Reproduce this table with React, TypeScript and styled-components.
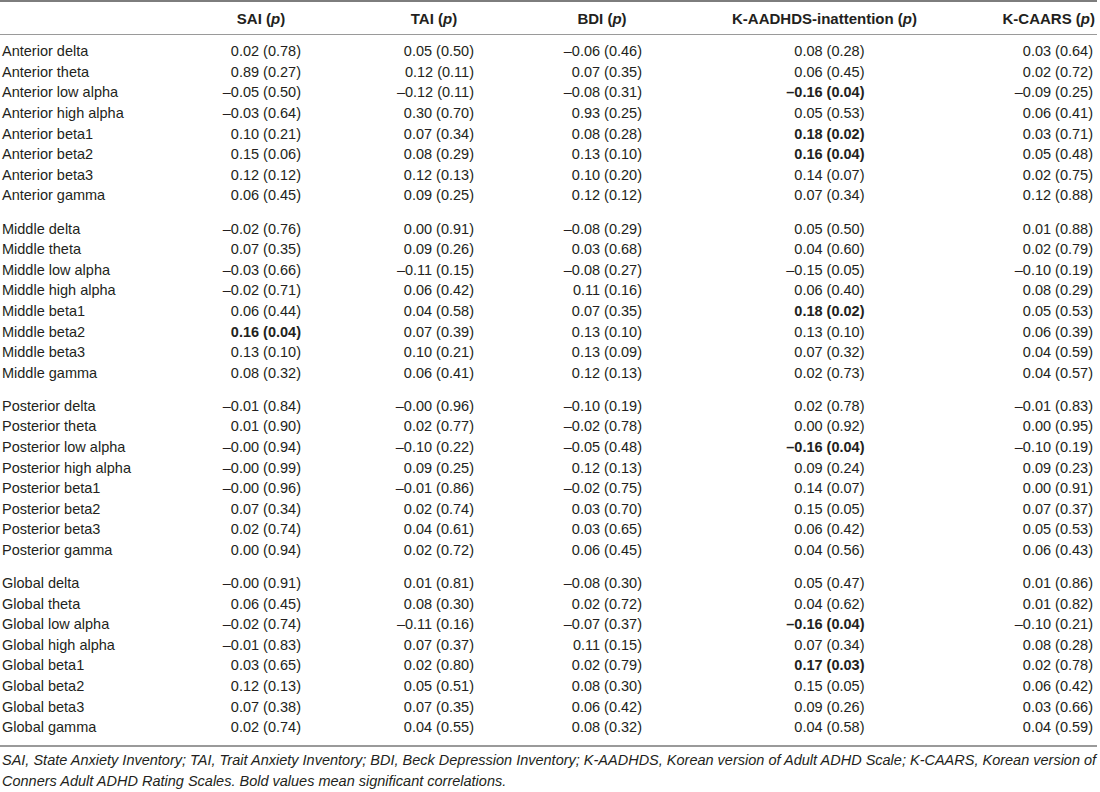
import React from "react";
import styled, { createGlobalStyle } from "styled-components";

const GlobalStyle = createGlobalStyle`
  html, body { margin: 0; padding: 0; background: #ffffff; }
  body { font-family: "Liberation Sans", Arial, sans-serif; color: #231f20; }
`;

const COLS = "190px 142px 204px 132px 313px 1fr";

const Table = styled.div`
  width: 1097px;
`;

const HeaderRow = styled.div`
  display: grid;
  grid-template-columns: ${COLS};
  height: 31px;
  padding-top: 1px;
  align-items: center;
  border-top: 2px solid #7d7d7d;
  border-bottom: 1px solid #9a9a9a;
  font-weight: bold;
  font-size: 15px;
`;

const HeadCell = styled.div<{ $end?: boolean }>`
  text-align: ${(p) => (p.$end ? "right" : "center")};
  padding-right: ${(p) => (p.$end ? "2px" : "0")};
  white-space: nowrap;
  i { font-style: italic; }
`;

const Body = styled.div`
  padding: 6px 0 7px;
  border-bottom: 2px solid #9a9a9a;
`;

const Group = styled.div`
  & + & { margin-top: 12.5px; }
`;

const Row = styled.div`
  display: grid;
  grid-template-columns: ${COLS};
  height: 20.6px;
  align-items: center;
  font-size: 14.5px;
`;

const Label = styled.div`
  padding-left: 2px;
  white-space: nowrap;
`;

const Cell = styled.div<{ $end?: boolean }>`
  display: flex;
  justify-content: ${(p) => (p.$end ? "flex-end" : "center")};
  padding-right: ${(p) => (p.$end ? "4px" : "0")};
`;

const Value = styled.span<{ $bold?: boolean }>`
  display: inline-block;
  width: 80px;
  text-align: right;
  white-space: nowrap;
  font-weight: ${(p) => (p.$bold ? "bold" : "normal")};
`;

const Note = styled.p`
  margin: 0;
  padding: 3px 0 0 2px;
  font-size: 14.5px;
  line-height: 21.5px;
  font-style: italic;
  white-space: nowrap;
`;

type GroupData = { name: string; rows: string[][] };

const bands = ["delta", "theta", "low alpha", "high alpha", "beta1", "beta2", "beta3", "gamma"];

const data: GroupData[] = [
  {
    name: "Anterior",
    rows: [
      ["0.02 (0.78)", "0.05 (0.50)", "–0.06 (0.46)", "0.08 (0.28)", "0.03 (0.64)"],
      ["0.89 (0.27)", "0.12 (0.11)", "0.07 (0.35)", "0.06 (0.45)", "0.02 (0.72)"],
      ["–0.05 (0.50)", "–0.12 (0.11)", "–0.08 (0.31)", "*–0.16 (0.04)", "–0.09 (0.25)"],
      ["–0.03 (0.64)", "0.30 (0.70)", "0.93 (0.25)", "0.05 (0.53)", "0.06 (0.41)"],
      ["0.10 (0.21)", "0.07 (0.34)", "0.08 (0.28)", "*0.18 (0.02)", "0.03 (0.71)"],
      ["0.15 (0.06)", "0.08 (0.29)", "0.13 (0.10)", "*0.16 (0.04)", "0.05 (0.48)"],
      ["0.12 (0.12)", "0.12 (0.13)", "0.10 (0.20)", "0.14 (0.07)", "0.02 (0.75)"],
      ["0.06 (0.45)", "0.09 (0.25)", "0.12 (0.12)", "0.07 (0.34)", "0.12 (0.88)"],
    ],
  },
  {
    name: "Middle",
    rows: [
      ["–0.02 (0.76)", "0.00 (0.91)", "–0.08 (0.29)", "0.05 (0.50)", "0.01 (0.88)"],
      ["0.07 (0.35)", "0.09 (0.26)", "0.03 (0.68)", "0.04 (0.60)", "0.02 (0.79)"],
      ["–0.03 (0.66)", "–0.11 (0.15)", "–0.08 (0.27)", "–0.15 (0.05)", "–0.10 (0.19)"],
      ["–0.02 (0.71)", "0.06 (0.42)", "0.11 (0.16)", "0.06 (0.40)", "0.08 (0.29)"],
      ["0.06 (0.44)", "0.04 (0.58)", "0.07 (0.35)", "*0.18 (0.02)", "0.05 (0.53)"],
      ["*0.16 (0.04)", "0.07 (0.39)", "0.13 (0.10)", "0.13 (0.10)", "0.06 (0.39)"],
      ["0.13 (0.10)", "0.10 (0.21)", "0.13 (0.09)", "0.07 (0.32)", "0.04 (0.59)"],
      ["0.08 (0.32)", "0.06 (0.41)", "0.12 (0.13)", "0.02 (0.73)", "0.04 (0.57)"],
    ],
  },
  {
    name: "Posterior",
    rows: [
      ["–0.01 (0.84)", "–0.00 (0.96)", "–0.10 (0.19)", "0.02 (0.78)", "–0.01 (0.83)"],
      ["0.01 (0.90)", "0.02 (0.77)", "–0.02 (0.78)", "0.00 (0.92)", "0.00 (0.95)"],
      ["–0.00 (0.94)", "–0.10 (0.22)", "–0.05 (0.48)", "*–0.16 (0.04)", "–0.10 (0.19)"],
      ["–0.00 (0.99)", "0.09 (0.25)", "0.12 (0.13)", "0.09 (0.24)", "0.09 (0.23)"],
      ["–0.00 (0.96)", "–0.01 (0.86)", "–0.02 (0.75)", "0.14 (0.07)", "0.00 (0.91)"],
      ["0.07 (0.34)", "0.02 (0.74)", "0.03 (0.70)", "0.15 (0.05)", "0.07 (0.37)"],
      ["0.02 (0.74)", "0.04 (0.61)", "0.03 (0.65)", "0.06 (0.42)", "0.05 (0.53)"],
      ["0.00 (0.94)", "0.02 (0.72)", "0.06 (0.45)", "0.04 (0.56)", "0.06 (0.43)"],
    ],
  },
  {
    name: "Global",
    rows: [
      ["–0.00 (0.91)", "0.01 (0.81)", "–0.08 (0.30)", "0.05 (0.47)", "0.01 (0.86)"],
      ["0.06 (0.45)", "0.08 (0.30)", "0.02 (0.72)", "0.04 (0.62)", "0.01 (0.82)"],
      ["–0.02 (0.74)", "–0.11 (0.16)", "–0.07 (0.37)", "*–0.16 (0.04)", "–0.10 (0.21)"],
      ["–0.01 (0.83)", "0.07 (0.37)", "0.11 (0.15)", "0.07 (0.34)", "0.08 (0.28)"],
      ["0.03 (0.65)", "0.02 (0.80)", "0.02 (0.79)", "*0.17 (0.03)", "0.02 (0.78)"],
      ["0.12 (0.13)", "0.05 (0.51)", "0.08 (0.30)", "0.15 (0.05)", "0.06 (0.42)"],
      ["0.07 (0.38)", "0.07 (0.35)", "0.06 (0.42)", "0.09 (0.26)", "0.03 (0.66)"],
      ["0.02 (0.74)", "0.04 (0.55)", "0.08 (0.32)", "0.04 (0.58)", "0.04 (0.59)"],
    ],
  },
];

const headers = ["SAI", "TAI", "BDI", "K-AADHDS-inattention", "K-CAARS"];

export default function App() {
  return (
    <>
      <GlobalStyle />
      <Table>
        <HeaderRow>
          <div />
          {headers.map((h, i) => (
            <HeadCell key={h} $end={i === headers.length - 1}>
              {h} (<i>p</i>)
            </HeadCell>
          ))}
        </HeaderRow>
        <Body>
          {data.map((g) => (
            <Group key={g.name}>
              {g.rows.map((r, ri) => (
                <Row key={ri}>
                  <Label>
                    {g.name} {bands[ri]}
                  </Label>
                  {r.map((v, ci) => {
                    const bold = v.startsWith("*");
                    return (
                      <Cell key={ci} $end={ci === r.length - 1}>
                        <Value $bold={bold}>{bold ? v.slice(1) : v}</Value>
                      </Cell>
                    );
                  })}
                </Row>
              ))}
            </Group>
          ))}
        </Body>
        <Note>
          SAI, State Anxiety Inventory; TAI, Trait Anxiety Inventory; BDI, Beck Depression Inventory; K-AADHDS, Korean version of Adult ADHD Scale; K-CAARS, Korean version of
          <br />
          Conners Adult ADHD Rating Scales. Bold values mean significant correlations.
        </Note>
      </Table>
    </>
  );
}
